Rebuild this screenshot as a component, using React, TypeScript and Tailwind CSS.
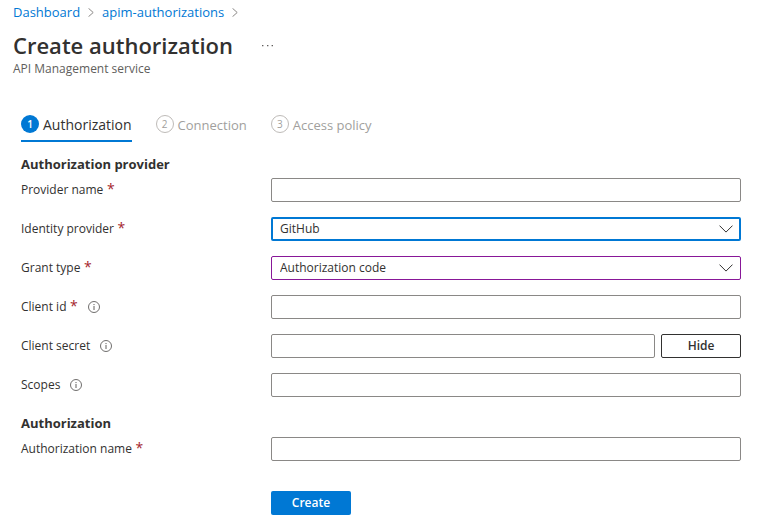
import { useState, type ReactNode } from "react";

const INPUT =
  "block h-6 w-full min-w-0 rounded-[2px] border border-[#8a8886] bg-white px-2 text-[12px] text-[#323130] outline-none";

function Chevron({ className }: { className: string }) {
  return (
    <svg className={className} viewBox="0 0 14 8" fill="none" stroke="currentColor" aria-hidden="true">
      <path d="M0.5 0.6 7 7.1 13.5 0.6" />
    </svg>
  );
}

function Crumb({ children }: { children: ReactNode }) {
  return (
    <li className="flex items-center gap-2">
      <a href="#" className="text-[#0078d4]">
        {children}
      </a>
      <svg className="h-[9px] w-[6px] text-[#8a8886]" viewBox="0 0 6 9" fill="none" stroke="currentColor" aria-hidden="true">
        <path d="M0.5 0.3 5.2 4.5 0.5 8.7" />
      </svg>
    </li>
  );
}

function InfoIcon() {
  return (
    <svg className="ml-2.5 size-3 text-[#605e5c]" viewBox="0 0 12 12" fill="none" stroke="currentColor" aria-hidden="true">
      <circle cx="6" cy="6" r="5.5" strokeWidth="0.9" />
      <path d="M6 5v4M6 3v1.1" />
    </svg>
  );
}

function Step({ index, label, active }: { index: number; label: string; active?: boolean }) {
  return (
    <button
      type="button"
      className={
        active
          ? "flex h-[27px] items-start gap-1 border-b-2 border-[#0078d4] text-[#323130]"
          : "flex h-[27px] items-start gap-1 border-b-2 border-transparent text-[#a19f9d]"
      }
    >
      <span
        className={
          active
            ? "flex size-[18px] items-center justify-center rounded-full bg-[#0078d4] text-[10px] font-semibold text-white"
            : "flex size-[18px] items-center justify-center rounded-full border border-[#bebbb8] text-[10px]"
        }
      >
        {index}
      </span>
      <span className={active ? "text-[14px] leading-5 font-medium" : "text-[13px] leading-5"}>{label}</span>
    </button>
  );
}

function Field({
  id,
  label,
  required,
  info,
  children,
}: {
  id: string;
  label: string;
  required?: boolean;
  info?: boolean;
  children: ReactNode;
}) {
  return (
    <div className="flex items-center">
      <div className="flex w-[250px] shrink-0 items-center">
        <label htmlFor={id}>
          {label}
          {required && <span className="text-[14px] leading-none font-medium text-[#a4262c]"> *</span>}
        </label>
        {info && <InfoIcon />}
      </div>
      <div className="flex min-w-0 flex-1 gap-1.5">{children}</div>
    </div>
  );
}

function Select({ id, options, tone }: { id: string; options: string[]; tone: string }) {
  return (
    <div className="relative min-w-0 flex-1">
      <select id={id} className={tone}>
        {options.map((option) => (
          <option key={option}>{option}</option>
        ))}
      </select>
      <Chevron className="pointer-events-none absolute top-2 right-2 h-2 w-3.5 text-[#323130]" />
    </div>
  );
}

export default function App() {
  const [secretVisible, setSecretVisible] = useState(true);

  return (
    <div className="bg-white font-['Open_Sans','Noto_Sans',sans-serif] text-[12px] leading-5 text-[#323130]">
      <header className="px-[13px] pt-[2px]">
        <nav aria-label="Breadcrumb">
          <ol className="flex gap-2 text-[13px]">
            <Crumb>Dashboard</Crumb>
            <Crumb>apim-authorizations</Crumb>
          </ol>
        </nav>
        <div className="mt-2 flex items-center gap-7">
          <h1 className="text-[22px] leading-[30px] font-semibold">Create authorization</h1>
          <button type="button" aria-label="More actions" className="text-[#605e5c]">
            <svg className="size-3" viewBox="0 0 12 12" fill="currentColor" aria-hidden="true">
              <path d="M1 6h1.4v1.3H1zM6 6h1.4v1.3H6zM10.6 6H12v1.3h-1.4z" />
            </svg>
          </button>
        </div>
        <p className="leading-[18px] text-[#605e5c]">API Management service</p>
      </header>

      <main className="pt-[37px] pr-[18px] pl-[21px]">
        <nav aria-label="Steps" className="flex gap-6">
          <Step index={1} label="Authorization" active />
          <Step index={2} label="Connection" />
          <Step index={3} label="Access policy" />
        </nav>

        <form onSubmit={(event) => event.preventDefault()}>
          <h2 className="mt-3 mb-1 text-[13px] font-bold">Authorization provider</h2>
          <div className="flex flex-col gap-[15px]">
            <Field id="provider-name" label="Provider name" required>
              <input id="provider-name" className={INPUT} />
            </Field>
            <Field id="identity-provider" label="Identity provider" required>
              <Select
                id="identity-provider"
                options={["GitHub"]}
                tone="block h-6 w-full appearance-none rounded-[2px] border-2 border-[#0078d4] bg-white px-[7px] text-[12px] leading-5 outline-none"
              />
            </Field>
            <Field id="grant-type" label="Grant type" required>
              <Select
                id="grant-type"
                options={["Authorization code"]}
                tone="block h-6 w-full appearance-none rounded-[2px] border border-[#881798] bg-white px-2 text-[12px] leading-5 outline-none"
              />
            </Field>
            <Field id="client-id" label="Client id" required info>
              <input id="client-id" className={INPUT} />
            </Field>
            <Field id="client-secret" label="Client secret" info>
              <input id="client-secret" type={secretVisible ? "text" : "password"} className={INPUT} />
              <button
                type="button"
                onClick={() => setSecretVisible(!secretVisible)}
                className="h-6 w-20 shrink-0 rounded-[2px] border border-[#323130] text-[12px] leading-5 font-semibold"
              >
                {secretVisible ? "Hide" : "Show"}
              </button>
            </Field>
            <Field id="scopes" label="Scopes" info>
              <input id="scopes" className={INPUT} />
            </Field>
          </div>

          <h2 className="mt-4 mb-1 text-[13px] font-bold">Authorization</h2>
          <Field id="authorization-name" label="Authorization name" required>
            <input id="authorization-name" className={INPUT} />
          </Field>

          <div className="mt-[30px] pb-3 pl-[250px]">
            <button type="submit" className="block h-6 w-20 rounded-[2px] bg-[#0078d4] text-[12px] font-semibold text-white">
              Create
            </button>
          </div>
        </form>
      </main>
    </div>
  );
}
